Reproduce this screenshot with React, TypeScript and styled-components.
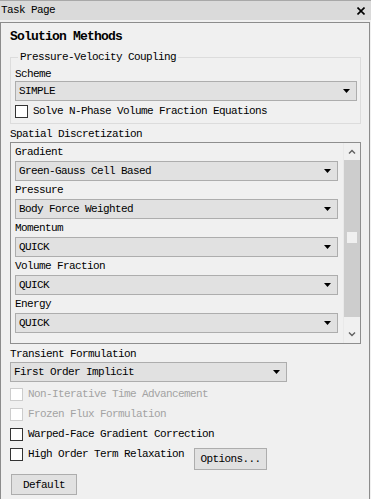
import React from 'react';
import styled, { createGlobalStyle } from 'styled-components';

const GlobalStyle = createGlobalStyle`
	html, body {
		margin: 0;
		padding: 0;
		background: #f0f0f0;
		overflow: hidden;
	}
	body {
		font-family: 'Liberation Mono', 'DejaVu Sans Mono', monospace;
		font-size: 11px;
		letter-spacing: -0.6px;
		color: #000;
	}
`;

const TitleBar = styled.div`
	display: flex;
	align-items: center;
	justify-content: space-between;
	height: 19px;
	border-top: 1px solid #a8a8a8;
	background: #dadada;
	padding: 0 6px 0 1px;
	line-height: 19px;
`;

const Panel = styled.div`
	margin-top: 2px;
	width: 370px;
	height: 490px;
	box-sizing: border-box;
	border: 1px solid #8c8c8c;
	padding: 6px 8px 0 9px;
`;

const Heading = styled.div`
	font-size: 13px;
	font-weight: bold;
	letter-spacing: -0.8px;
	line-height: 16px;
	margin-bottom: 5px;
`;

const Group = styled.fieldset`
	margin: 0;
	padding: 3px 3px 2px 4px;
	border: 1px solid #dcdcdc;
	min-width: 0;
`;

const Legend = styled.legend`
	padding: 0 2px;
	margin-left: 3px;
	line-height: 14px;
`;

const Label = styled.div<{ $top?: number; $bottom?: number }>`
	line-height: 14px;
	margin-top: ${(p) => p.$top ?? 2}px;
	margin-bottom: ${(p) => p.$bottom ?? 2}px;
`;

const SelectBox = styled.div<{ $width?: number }>`
	display: flex;
	align-items: center;
	justify-content: space-between;
	box-sizing: border-box;
	height: 20px;
	width: ${(p) => (p.$width ? `${p.$width}px` : '100%')};
	border: 1px solid #adadad;
	background: #e1e1e1;
	padding: 0 6px 0 3px;
	line-height: 18px;
`;

const CheckList = styled.div`
	margin-top: 2px;
`;

const CheckRow = styled.div<{ $disabled?: boolean }>`
	display: flex;
	align-items: center;
	height: 20px;
	color: ${(p) => (p.$disabled ? '#a3a3a3' : '#000')};
`;

const Box = styled.span<{ $disabled?: boolean }>`
	display: inline-block;
	width: 13px;
	height: 13px;
	box-sizing: border-box;
	border: 1px solid ${(p) => (p.$disabled ? '#cccccc' : '#333333')};
	background: #fff;
	margin-right: 5px;
	flex-shrink: 0;
`;

const ScrollBox = styled.div`
	display: flex;
	height: 202px;
	box-sizing: border-box;
	border: 1px solid #8e8e8e;
`;

const ScrollContent = styled.div`
	flex: 1;
	padding: 0 5px 0 4px;
	overflow: hidden;
`;

const ScrollBar = styled.div`
	width: 16px;
	display: flex;
	flex-direction: column;
	align-items: stretch;
	border-left: 1px solid #e9e9e9;
`;

const ArrowCell = styled.div`
	height: 17px;
	display: flex;
	align-items: center;
	justify-content: center;
`;

const Thumb = styled.div`
	height: 157px;
	background: #cdcdcd;
	display: flex;
	flex-direction: column;
	align-items: center;
`;

const Grip = styled.div`
	margin-top: 72px;
	width: 10px;
	height: 11px;
	background: #f0f0f0;
`;

const Track = styled.div`
	flex: 1;
`;

const Button = styled.div<{ $width: number; $height: number }>`
	display: inline-flex;
	align-items: center;
	justify-content: center;
	box-sizing: border-box;
	width: ${(p) => p.$width}px;
	height: ${(p) => p.$height}px;
	border: 1px solid #adadad;
	background: #e1e1e1;
`;

const OptionsButton = styled(Button)`
	align-self: flex-start;
	margin-top: 4px;
	margin-left: 10px;
`;

const Footer = styled.div`
	margin-top: 10px;
	padding-left: 1px;
`;

const DownTriangle = () => (
	<svg width='7' height='4' viewBox='0 0 7 4'>
		<polygon points='0,0 7,0 3.5,4' fill='#000' />
	</svg>
);

const Chevron: React.FC<{ up?: boolean }> = ({ up }) => (
	<svg width='8' height='5' viewBox='0 0 8 5'>
		<polyline
			points={up ? '1,4.5 4,1.5 7,4.5' : '1,0.5 4,3.5 7,0.5'}
			fill='none'
			stroke='#606060'
			strokeWidth='1.4'
		/>
	</svg>
);

const Select: React.FC<{ value: string; width?: number }> = ({ value, width }) => (
	<SelectBox $width={width}>
		<span>{value}</span>
		<DownTriangle />
	</SelectBox>
);

const Check: React.FC<{ label: string; disabled?: boolean }> = ({ label, disabled }) => (
	<CheckRow $disabled={disabled}>
		<Box $disabled={disabled} />
		{label}
	</CheckRow>
);

const fields = [
	{ label: 'Gradient', value: 'Green-Gauss Cell Based' },
	{ label: 'Pressure', value: 'Body Force Weighted' },
	{ label: 'Momentum', value: 'QUICK' },
	{ label: 'Volume Fraction', value: 'QUICK' },
	{ label: 'Energy', value: 'QUICK' },
];

const App: React.FC = () => {
	return (
		<>
			<GlobalStyle />
			<TitleBar>
				<span>Task Page</span>
				<svg width='8' height='8' viewBox='0 0 8 8'>
					<path d='M0.5 0.5 L7.5 7.5 M7.5 0.5 L0.5 7.5' stroke='#000' strokeWidth='1.6' />
				</svg>
			</TitleBar>
			<Panel>
				<Heading>Solution Methods</Heading>
				<Group>
					<Legend>Pressure-Velocity Coupling</Legend>
					<Label $top={0} $bottom={0}>Scheme</Label>
					<Select value='SIMPLE' />
					<Check label='Solve N-Phase Volume Fraction Equations' />
				</Group>
				<Label $top={3} $bottom={1}>Spatial Discretization</Label>
				<ScrollBox>
					<ScrollContent>
						{fields.map((f) => (
							<div key={f.label}>
								<Label>{f.label}</Label>
								<Select value={f.value} />
							</div>
						))}
					</ScrollContent>
					<ScrollBar>
						<ArrowCell>
							<Chevron up />
						</ArrowCell>
						<Thumb>
							<Grip />
						</Thumb>
						<Track />
						<ArrowCell>
							<Chevron />
						</ArrowCell>
					</ScrollBar>
				</ScrollBox>
				<Label $top={3} $bottom={1}>Transient Formulation</Label>
				<Select value='First Order Implicit' width={277} />
				<CheckList>
					<Check label='Non-Iterative Time Advancement' disabled />
					<Check label='Frozen Flux Formulation' disabled />
					<Check label='Warped-Face Gradient Correction' />
					<CheckRow>
						<Box />
						High Order Term Relaxation
						<OptionsButton $width={73} $height={22}>Options...</OptionsButton>
					</CheckRow>
				</CheckList>
				<Footer>
					<Button $width={66} $height={21}>Default</Button>
				</Footer>
			</Panel>
		</>
	);
};

export default App;
